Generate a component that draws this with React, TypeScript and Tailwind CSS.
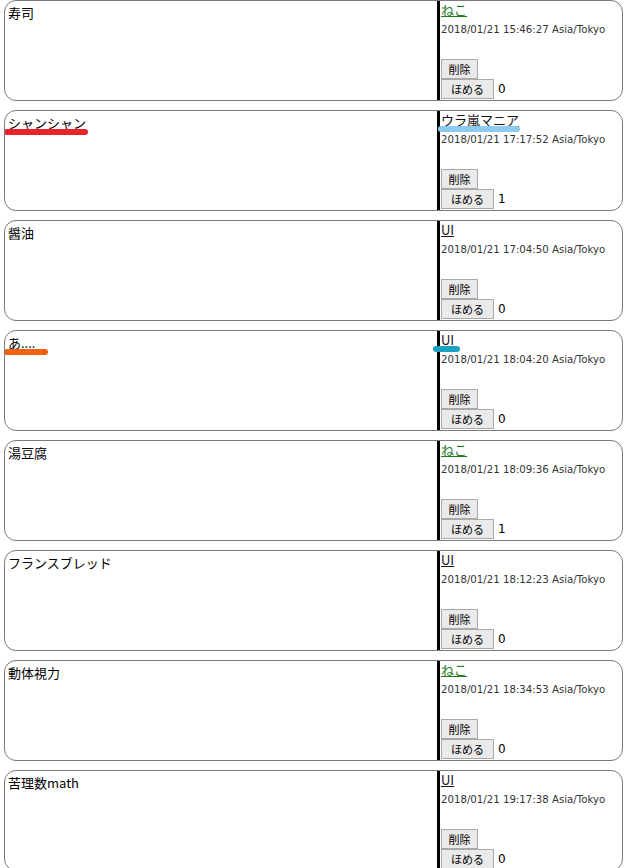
import React from 'react';

type Post = {
  text: string;
  user: string;
  date: string;
  likes: number;
  green?: boolean;
  textMark?: { color: string; width: number };
  userMark?: { color: string; left: number; width: number };
};

const posts: Post[] = [
  { text: '寿司', user: 'ねこ', date: '2018/01/21 15:46:27 Asia/Tokyo', likes: 0, green: true },
  {
    text: 'シャンシャン',
    user: 'ウラ嵐マニア',
    date: '2018/01/21 17:17:52 Asia/Tokyo',
    likes: 1,
    textMark: { color: '#e8232b', width: 84 },
    userMark: { color: '#8ccaf0', left: -3, width: 82 },
  },
  { text: '醤油', user: 'UI', date: '2018/01/21 17:04:50 Asia/Tokyo', likes: 0 },
  {
    text: 'あ....',
    user: 'UI',
    date: '2018/01/21 18:04:20 Asia/Tokyo',
    likes: 0,
    textMark: { color: '#f2620f', width: 44 },
    userMark: { color: '#1da1c0', left: -8, width: 27 },
  },
  { text: '湯豆腐', user: 'ねこ', date: '2018/01/21 18:09:36 Asia/Tokyo', likes: 1, green: true },
  { text: 'フランスブレッド', user: 'UI', date: '2018/01/21 18:12:23 Asia/Tokyo', likes: 0 },
  { text: '動体視力', user: 'ねこ', date: '2018/01/21 18:34:53 Asia/Tokyo', likes: 0, green: true },
  { text: '苦理数math', user: 'UI', date: '2018/01/21 19:17:38 Asia/Tokyo', likes: 0 },
];

const font = { fontFamily: '"Noto Sans CJK JP", "DejaVu Sans", sans-serif' };
const latin = { fontFamily: '"DejaVu Sans", "Noto Sans CJK JP", sans-serif' };

const PostCard: React.FC<{ post: Post }> = ({ post }) => (
  <div className="flex h-[101px] rounded-[12px] border border-[#7b7b7b] bg-white overflow-hidden">
    {/* message */}
    <div className="relative w-[432px] pl-[3px] pt-[3px] text-[13px] leading-[18px] text-black">
      {post.text}
      {post.textMark && (
        <span
          className="absolute left-[-1px] top-[18px] h-[6px] rounded-full"
          style={{ width: post.textMark.width, background: post.textMark.color }}
        />
      )}
    </div>
    <div className="w-[3px] bg-black" />
    {/* meta */}
    <div className="flex flex-1 flex-col pl-[1px] pt-[1px] leading-none">
      <div className="relative h-[16px] text-[13px] leading-[16px]">
        <a href="#" className={`underline ${post.green ? 'text-[#1d7d1d]' : 'text-[#151020]'}`}>
          {post.user}
        </a>
        {post.userMark && (
          <span
            className="absolute top-[14px] h-[6px] rounded-full"
            style={{ left: post.userMark.left, width: post.userMark.width, background: post.userMark.color }}
          />
        )}
      </div>
      <div className="mt-[5px] h-[14px] text-[10.2px] leading-[14px] text-[#333]" style={latin}>
        {post.date}
      </div>
      <div className="mt-[22px] h-[20px]">
        <button className="h-[20px] w-[37px] border border-[#a9a9a9] bg-[#eaeaea] text-[11px] leading-[18px] text-black">
          削除
        </button>
      </div>
      <div className="flex h-[20px] items-center">
        <button className="h-[20px] w-[53px] border border-[#a9a9a9] bg-[#eaeaea] text-[11px] leading-[18px] text-black">
          ほめる
        </button>
        <span className="ml-[4px] text-[12px] leading-[16px]" style={latin}>
          {post.likes}
        </span>
      </div>
    </div>
  </div>
);

const App: React.FC = () => (
  <div className="h-[868px] overflow-hidden bg-white pl-[4px] pr-[5px]" style={font}>
    <div className="flex flex-col gap-[9px]">
      {posts.map((p, i) => (
        <PostCard key={i} post={p} />
      ))}
    </div>
  </div>
);

export default App;
